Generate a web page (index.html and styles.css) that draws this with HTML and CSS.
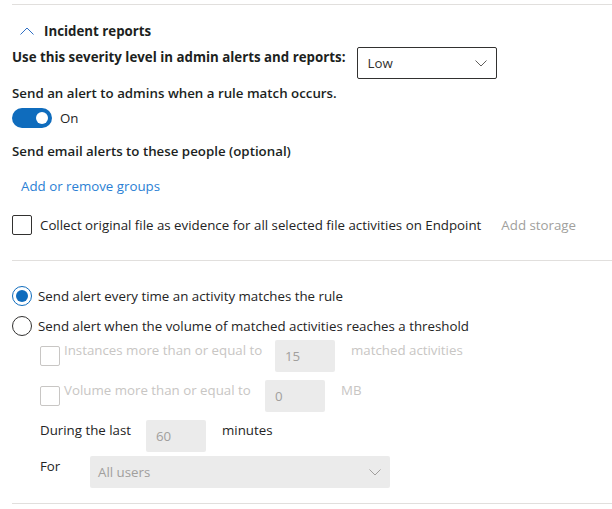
FILE: index.html
```html
<!DOCTYPE html>
<html lang="en">
<head>
<meta charset="utf-8">
<title>Incident reports</title>
<link rel="stylesheet" href="styles.css">
</head>
<body>
<div class="rule"></div>

<div class="header">
  <svg class="chev-up" width="14" height="8" viewBox="0 0 14 8"><path d="M0.5 7.5 L7 1 L13.5 7.5" fill="none" stroke="#2f6fc4" stroke-width="1"/></svg>
  <span class="header-title">Incident reports</span>
</div>

<div class="severity">
  <span class="label-bold">Use this severity level in admin alerts and reports:</span>
  <div class="select">
    <span>Low</span>
    <svg width="12" height="7" viewBox="0 0 12 7"><path d="M0.5 0.5 L6 6 L11.5 0.5" fill="none" stroke="#605e5c" stroke-width="1"/></svg>
  </div>
</div>

<div class="label-semi alert-label">Send an alert to admins when a rule match occurs.</div>

<div class="toggle-row">
  <span class="toggle"><span class="knob"></span></span>
  <span>On</span>
</div>

<div class="label-semi email-label">Send email alerts to these people (optional)</div>

<div class="link">Add or remove groups</div>

<div class="collect-row">
  <span class="checkbox"></span>
  <span class="collect-text">Collect original file as evidence for all selected file activities on Endpoint</span>
  <span class="muted">Add storage</span>
</div>

<div class="rule rule-mid"></div>

<div class="radio-row first">
  <span class="radio checked"><span class="dot"></span></span>
  <span>Send alert every time an activity matches the rule</span>
</div>
<div class="radio-row second">
  <span class="radio"></span>
  <span>Send alert when the volume of matched activities reaches a threshold</span>
</div>

<div class="sub-row instances">
  <span class="checkbox disabled"></span>
  <span class="disabled-text w-inst">Instances more than or equal to</span>
  <span class="input">15</span>
  <span class="disabled-text suffix">matched activities</span>
</div>

<div class="sub-row volume">
  <span class="checkbox disabled"></span>
  <span class="disabled-text w-vol">Volume more than or equal to</span>
  <span class="input">0</span>
  <span class="disabled-text suffix">MB</span>
</div>

<div class="plain-row during">
  <span class="w-during">During the last</span>
  <span class="input">60</span>
  <span class="suffix">minutes</span>
</div>

<div class="plain-row for">
  <span class="w-for">For</span>
  <div class="dropdown">
    <span>All users</span>
    <svg width="12" height="7" viewBox="0 0 12 7"><path d="M0.5 0.5 L6 6 L11.5 0.5" fill="none" stroke="#a19f9d" stroke-width="1"/></svg>
  </div>
</div>

<div class="rule rule-bottom"></div>
</body>
</html>
```
FILE: styles.css
```css
* { box-sizing: border-box; }

html, body { background: #ffffff; }

body {
  margin: 0;
  padding: 4px 0 0 12px;
  font-family: "Open Sans", "Noto Sans", sans-serif;
  font-size: 13.3px;
  line-height: 20px;
  color: #242424;
  overflow: hidden;
}

.rule {
  height: 0;
  border-top: 1px solid #e1dfdd;
}

.header {
  margin-top: 15px;
  height: 22px;
  display: flex;
  align-items: center;
  padding-left: 8px;
  gap: 10px;
}

.header-title {
  font-weight: 700;
  color: #201f1e;
}

.severity {
  margin-top: 5px;
  display: flex;
  align-items: flex-start;
  gap: 12px;
}

.label-bold {
  font-weight: 700;
  color: #201f1e;
}

.label-semi {
  font-weight: 600;
  color: #201f1e;
}

.select {
  width: 140px;
  height: 32px;
  border: 1px solid #323130;
  border-radius: 2px;
  display: flex;
  align-items: center;
  justify-content: space-between;
  padding: 0 9px 0 9px;
  color: #323130;
}

.alert-label { margin-top: 4px; }

.toggle-row {
  margin-top: 5px;
  display: flex;
  align-items: center;
  gap: 8px;
  height: 20px;
}

.toggle {
  width: 40px;
  height: 20px;
  border-radius: 10px;
  background: #0f6cbd;
  display: flex;
  align-items: center;
  justify-content: flex-end;
  padding-right: 4px;
}

.knob {
  width: 12px;
  height: 12px;
  border-radius: 50%;
  background: #ffffff;
}

.email-label { margin-top: 13px; }

.link {
  margin-top: 15px;
  padding-left: 9px;
  color: #2b7fd4;
}

.collect-row {
  margin-top: 19px;
  display: flex;
  align-items: center;
  height: 20px;
}

.checkbox {
  width: 20px;
  height: 20px;
  border: 1px solid #323130;
  border-radius: 2px;
  flex: none;
}

.checkbox.disabled {
  border-color: #c8c6c4;
}

.collect-text { margin-left: 8px; }

.muted {
  margin-left: 20px;
  color: #a19f9d;
}

.rule-mid { margin-top: 25px; }

.radio-row {
  display: flex;
  align-items: center;
  gap: 6px;
  height: 20px;
}

.radio-row.first { margin-top: 25px; }
.radio-row.second { margin-top: 10px; }

.radio {
  width: 20px;
  height: 20px;
  border-radius: 50%;
  border: 1px solid #323130;
  display: flex;
  align-items: center;
  justify-content: center;
  flex: none;
}

.radio.checked { border-color: #0f6cbd; }

.dot {
  width: 12px;
  height: 12px;
  border-radius: 50%;
  background: #0f6cbd;
}

.sub-row {
  display: flex;
  align-items: flex-start;
  padding-left: 28px;
  height: 32px;
}

.sub-row.instances { margin-top: 4px; }
.sub-row.volume { margin-top: 8px; }

.sub-row .checkbox { margin-top: 6px; }

.disabled-text { color: #c8c6c4; }

.w-inst { margin-left: 4px; width: 211px; }
.w-vol { margin-left: 4px; width: 201px; }

.input {
  width: 60px;
  height: 32px;
  background: #ebebeb;
  border-radius: 2px;
  padding: 6px 10px;
  color: #a19f9d;
  flex: none;
}

.suffix { margin-left: 16px; }

.plain-row {
  display: flex;
  align-items: flex-start;
  padding-left: 28px;
  height: 32px;
}

.plain-row.during { margin-top: 8px; }
.plain-row.for { margin-top: 4px; }

.w-during { width: 106px; }
.w-for { width: 50px; }

.dropdown {
  width: 300px;
  height: 32px;
  background: #ebebeb;
  border-radius: 2px;
  display: flex;
  align-items: center;
  justify-content: space-between;
  padding: 0 9px 0 8px;
  color: #a19f9d;
}

.rule-bottom { margin-top: 15px; }
```
